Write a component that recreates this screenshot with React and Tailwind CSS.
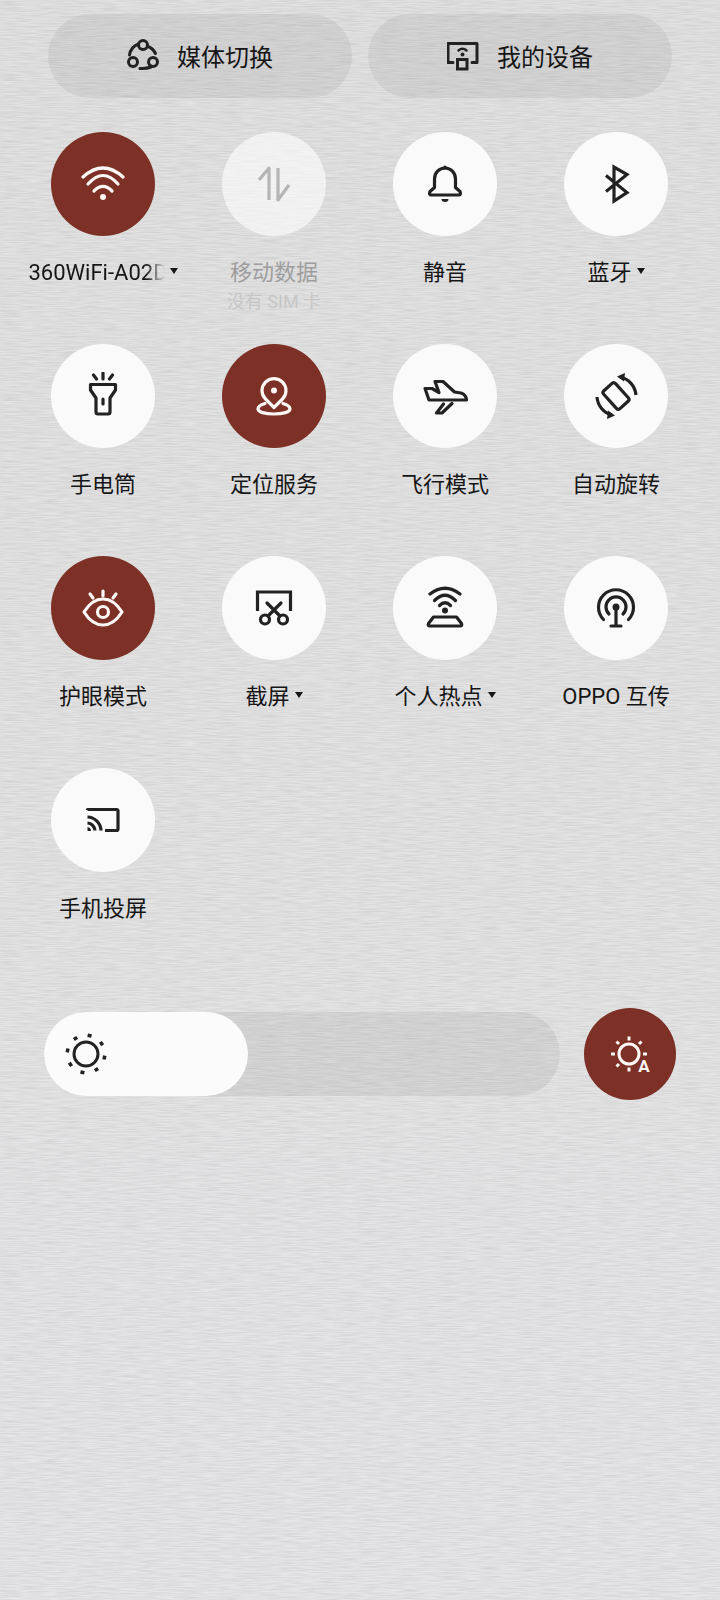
import React from 'react';

const dark = '#222222';

function Ico({ children, stroke = dark, sw = 3.2 }) {
  return (
    <svg width="48" height="48" viewBox="-24 -24 48 48" fill="none" stroke={stroke} strokeWidth={sw} strokeLinecap="round" strokeLinejoin="round">
      {children}
    </svg>
  );
}

const icons = {
  wifi: (c) => (
    <Ico stroke={c}>
      <path d="M-20 -7Q0 -25 20 -7" />
      <path d="M-15 0Q0 -17 15 0" />
      <path d="M-9 7Q0 -2 9 7" />
      <circle cx="0" cy="13" r="3" fill={c} stroke="none" />
    </Ico>
  ),
  data: (c) => (
    <Ico stroke={c}>
      <path d="M-5 16V-16L-15 -4" strokeLinecap="butt" />
      <path d="M4 -16V16L15 1" strokeLinecap="butt" />
    </Ico>
  ),
  bell: (c) => (
    <Ico stroke={c}>
      <path d="M-10.5 3.5V-5a10.5 11 0 0 1 21 0V3.5L15 7.5q1.5 3.5 -1.5 3.5H-13.5q-3 0 -1.5 -3.5Z" />
      <path d="M0 -17V-16" />
      <path d="M-3.5 15H3.5A3.5 3 0 0 1 -3.5 15Z" fill={c} stroke="none" />
    </Ico>
  ),
  bluetooth: (c) => (
    <Ico stroke={c}>
      <path d="M-10 -8.5L11 8.5L-2 17V-17L11 -9.5L-10 7.5" strokeLinecap="butt" strokeLinejoin="miter" />
    </Ico>
  ),
  flashlight: (c) => (
    <Ico stroke={c}>
      <path d="M-9.5 -21L-6.5 -17M0 -23V-17M9.5 -21L6.5 -17" />
      <path d="M-12.5 -11.5H12.5V-6L7 2V16a2 2 0 0 1 -2 2H-5a2 2 0 0 1 -2 -2V2L-12.5 -6Z" />
      <path d="M0 3V8" />
    </Ico>
  ),
  location: (c) => (
    <Ico stroke={c}>
      <path d="M0 11.5L-8.5 3A12 12 0 1 1 8.5 3Z" />
      <circle cx="0" cy="-5.5" r="3" fill={c} stroke="none" />
      <path d="M-9 7.5C-14 9 -16 11 -16 13C-16 16 -9 18 0 18C9 18 16 16 16 13C16 11 14 9 9 7.5" />
    </Ico>
  ),
  plane: (c) => (
    <Ico stroke={c}>
      <path d="M-20 -7.5H-13L-6 -3.5L-10 -14.5H-2L9.5 -4L16 -3Q21 -1.5 21.5 4H-16Z" />
      <path d="M-1.5 8L-8.5 17H-3L7 7.5" />
    </Ico>
  ),
  rotate: (c) => (
    <Ico stroke={c}>
      <rect x="-8" y="-12" width="16" height="24" rx="2.5" transform="rotate(-42)" />
      <path d="M4 -19A20 20 0 0 1 20 -1" strokeLinecap="butt" />
      <polygon points="1,-19.5 9,-23 8,-14.5" fill={c} stroke="none" />
      <path d="M-19 1A20 20 0 0 0 -4 19" strokeLinecap="butt" />
      <polygon points="-1,19.5 -9,23 -8,14.5" fill={c} stroke="none" />
    </Ico>
  ),
  eye: (c) => (
    <Ico stroke={c}>
      <path d="M-13 -14L-10 -10M0 -17V-12M13 -14L10 -10" />
      <path d="M-19 4C-14 -4 -7 -9 0 -9C7 -9 14 -4 19 4C14 12 7 17 0 17C-7 17 -14 12 -19 4Z" />
      <circle cx="0" cy="4" r="5.5" />
    </Ico>
  ),
  scissors: (c) => (
    <Ico stroke={c}>
      <path d="M-16.5 3V-16H16.5V3" strokeLinecap="butt" strokeLinejoin="miter" />
      <circle cx="-9" cy="11.5" r="4.5" />
      <circle cx="9" cy="11.5" r="4.5" />
      <path d="M-6 8L7 -5M6 8L-7 -5" />
    </Ico>
  ),
  hotspot: (c) => (
    <Ico stroke={c}>
      <path d="M-15 -14Q0 -25.5 15 -14" />
      <path d="M-10.5 -7.5Q0 -18 10.5 -7.5" />
      <path d="M-5.5 -2.5Q0 -8 5.5 -2.5" />
      <circle cx="0" cy="2.5" r="3" fill={c} stroke="none" />
      <path d="M-11.5 9H11.5L16.5 15.5q1 2.5 -1.5 2.5H-15q-2.5 0 -1.5 -2.5Z" />
    </Ico>
  ),
  transfer: (c) => (
    <Ico stroke={c}>
      <path d="M-12.5 11.5A17.5 17.5 0 1 1 12.5 11.5" />
      <path d="M-7 6A10 10 0 1 1 7 6" />
      <circle cx="0" cy="-1" r="3.5" fill={c} stroke="none" />
      <path d="M0 0V18M-5 18H5" />
    </Ico>
  ),
  cast: (c) => (
    <Ico stroke={c}>
      <path d="M-15.5 -10V-10.5H13.5a1.5 1.5 0 0 1 1.5 1.5V9a1.5 1.5 0 0 1 -1.5 1.5H2" strokeLinecap="butt" />
      <path d="M-15.5 -3A14 14 0 0 1 -2 10.5" strokeLinecap="butt" />
      <path d="M-15.5 3A8 8 0 0 1 -8 10.5" strokeLinecap="butt" />
      <path d="M-15.5 7A4 4 0 0 1 -12 11H-15.5Z" fill={c} stroke="none" />
    </Ico>
  ),
};

const tiles = [
  { icon: 'wifi', label: '360WiFi-A02D', on: true, caret: true, fade: true },
  { icon: 'data', label: '移动数据', sub: '没有 SIM 卡', off: true },
  { icon: 'bell', label: '静音' },
  { icon: 'bluetooth', label: '蓝牙', caret: true },
  { icon: 'flashlight', label: '手电筒' },
  { icon: 'location', label: '定位服务', on: true },
  { icon: 'plane', label: '飞行模式' },
  { icon: 'rotate', label: '自动旋转' },
  { icon: 'eye', label: '护眼模式', on: true },
  { icon: 'scissors', label: '截屏', caret: true },
  { icon: 'hotspot', label: '个人热点', caret: true },
  { icon: 'transfer', label: 'OPPO 互传' },
  { icon: 'cast', label: '手机投屏' },
];

function Tile({ t }) {
  const iconColor = t.on ? '#fbf7f5' : t.off ? '#b5b5b5' : dark;
  const bg = t.on ? 'bg-[#7d3026]' : t.off ? 'bg-white/60' : 'bg-[#fafafa]';
  return (
    <div className="h-[212px] flex flex-col items-center">
      <div className={`w-[104px] h-[104px] rounded-full flex items-center justify-center ${bg}`}>
        {icons[t.icon](iconColor)}
      </div>
      <div className={`mt-[22px] h-[29px] flex items-center gap-[5px] text-[22px] leading-[29px] whitespace-nowrap ${t.off ? 'text-[#9e9e9e]' : 'text-[#161616]'}`}>
        <span className={t.fade ? 'w-[136px] [mask-image:linear-gradient(to_right,black_86%,transparent)]' : ''}>{t.label}</span>
        {t.caret && <span className="w-0 h-0 mb-[4px] border-x-[4.5px] border-x-transparent border-t-[6px] border-t-[#161616]" />}
      </div>
      {t.sub && <div className="mt-[3px] text-[18px] leading-[24px] text-[#c6c6c6]">{t.sub}</div>}
    </div>
  );
}

function Pill({ label, children }) {
  return (
    <div className="flex-1 h-[84px] rounded-full bg-black/[0.055] flex items-center justify-center gap-[14px] text-[24px] text-[#161616]">
      {children}
      <span className="pt-[3px]">{label}</span>
    </div>
  );
}

export default function App() {
  return (
    <div className="relative w-[720px] h-[1600px] overflow-hidden bg-gradient-to-b from-[#e1e1e1] to-[#e6e5e7] font-['Roboto','Noto_Sans_CJK_SC',sans-serif]">
      {/* woven wallpaper grain */}
      <svg className="absolute inset-0" width="720" height="1600">
        <filter id="grain" x="0" y="0" width="100%" height="100%" colorInterpolationFilters="sRGB">
          <feTurbulence type="fractalNoise" baseFrequency="0.05 0.8" numOctaves="2" seed="7" />
          <feColorMatrix values="0 0 0 0 0  0 0 0 0 0  0 0 0 0 0  0.14 0 0 0 -0.045" />
        </filter>
        <rect width="720" height="1600" filter="url(#grain)" />
      </svg>

      <div className="relative">
        <div className="flex gap-4 px-12 pt-[14px]">
          <Pill label="媒体切换">
            <svg width="36" height="36" viewBox="-18 -18 36 36" fill="none" stroke={dark} strokeWidth="3" strokeLinecap="round">
              <circle cx="-2" cy="-11" r="4.5" />
              <circle cx="-12" cy="6" r="4.5" />
              <circle cx="8" cy="6" r="4.5" />
              <path d="M-6.5 -12A14 14 0 0 0 -15.5 -1" />
              <path d="M3 -9.5A14 14 0 0 1 10.5 -2.5" />
              <path d="M-5 12.5Q1 13 6 11" />
            </svg>
          </Pill>
          <Pill label="我的设备">
            <svg width="36" height="36" viewBox="-18 -18 36 36" fill="none" stroke={dark} strokeWidth="3" strokeLinecap="round" strokeLinejoin="round">
              <path d="M-12 6.5H-17V-12.5H12V6.5H7" />
              <rect x="-7.5" y="3.5" width="9.5" height="9.5" strokeLinejoin="miter" />
              <path d="M-6.5 -5.5Q-2.5 -9 1.5 -5.5" strokeWidth="2.5" />
              <circle cx="-2.5" cy="-1.5" r="2" fill={dark} stroke="none" />
            </svg>
          </Pill>
        </div>

        <div className="grid grid-cols-[repeat(4,171px)] ml-[17.5px] mt-[34px]">
          {tiles.map((t) => <Tile key={t.icon} t={t} />)}
        </div>

        {/* brightness */}
        <div className="flex items-center ml-[44px] mt-[28px] gap-[24px]">
          <div className="w-[516px] h-[84px] rounded-full bg-black/[0.06]">
            <div className="w-[204px] h-[84px] rounded-full bg-[#fbfbfb] flex items-center pl-[18px]">
              <svg width="48" height="48" viewBox="-24 -24 48 48" fill="none" stroke={dark} strokeWidth="3">
                <circle cx="0" cy="0" r="12" />
                <g transform="rotate(11)" strokeWidth="4">
                  <path d="M0 -17V-20.5M0 17V20.5M-17 0H-20.5M17 0H20.5M12 -12L14.5 -14.5M-12 12L-14.5 14.5M12 12L14.5 14.5M-12 -12L-14.5 -14.5" />
                </g>
              </svg>
            </div>
          </div>
          <div className="w-[92px] h-[92px] rounded-full bg-[#7d3026] flex items-center justify-center">
            <svg width="48" height="48" viewBox="-24 -24 48 48" fill="none" stroke="#fbf7f5" strokeWidth="3">
              <circle cx="-1" cy="0" r="10" />
              <path d="M-1 -13.5V-17.5M-1 13.5V17.5M-15 0H-19M13 0H17M9 -10L11.5 -12.5M-11 10L-13.5 12.5M-11 -10L-13.5 -12.5" />
              <text x="14" y="18" textAnchor="middle" fontSize="17" fontWeight="700" fill="#fbf7f5" stroke="none">A</text>
            </svg>
          </div>
        </div>
      </div>
    </div>
  );
}
